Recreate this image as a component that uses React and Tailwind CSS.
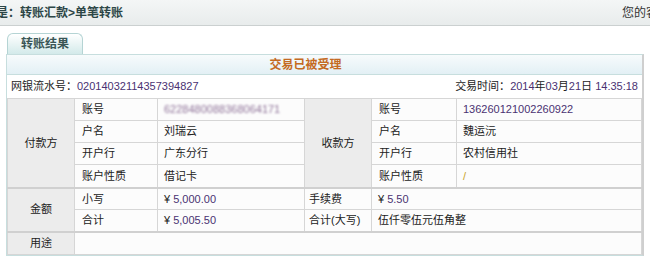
import React from "react";

const FONT = { fontFamily: '"Liberation Sans", Arial, "Noto Sans CJK SC", sans-serif' };

function Num({ children }) {
  return <span className="text-[#4a3272]">{children}</span>;
}

export default function App() {
  const grp = "bg-[#ececec] text-center border border-[#d6d6d6]";
  const lab = "pl-[7px] border border-[#d6d6d6] bg-[#fcfcfc]";
  const val = "pl-[6px] border border-[#d6d6d6] bg-[#fcfcfc]";
  return (
    <div className="w-[650px] h-[261px] overflow-hidden bg-white text-[11px] text-[#222]" style={FONT}>
      <div className="h-[26px] flex items-center border-b border-[#cbd0d0] bg-gradient-to-b from-[#f4f6f6] to-[#e8ecec]">
        <span className="ml-[-4px] font-bold text-[12px] text-[#2c4646] whitespace-nowrap">是：转账汇款&gt;单笔转账</span>
        <span className="ml-auto w-[28px] shrink-0 overflow-hidden whitespace-nowrap text-[12px] text-[#333]">您的客</span>
      </div>
      <div className="px-[6px] pt-[7px]">
        <div className="flex pl-[1px]">
          <div className="w-[76px] h-[21px] rounded-t-[6px] border border-b-0 border-[#b5d4d4] bg-gradient-to-b from-white to-[#d3eaea] text-center font-bold text-[12px] leading-[21px] text-[#3a5656]">
            转账结果
          </div>
        </div>
        <div className="border border-[#c7dede] border-r-2 border-r-[#cfcfcf]">
          <div className="h-[20px] leading-[20px] text-center pr-[38px] font-bold text-[12px] text-[#c46a22] bg-gradient-to-b from-[#f7fbfc] to-[#e3f0f5] border-b border-[#c7dede]">
            交易已被受理
          </div>
          <div className="h-[23px] flex items-center justify-between px-[4px]">
            <span>网银流水号：<Num>02014032114357394827</Num></span>
            <span>交易时间：<Num>2014</Num>年<Num>03</Num>月<Num>21</Num>日 <Num>14:35:18</Num></span>
          </div>
          <table className="w-full border-collapse table-fixed">
            <colgroup>
              <col className="w-[67px]" />
              <col className="w-[83px]" />
              <col className="w-[147px]" />
              <col className="w-[67px]" />
              <col className="w-[85px]" />
              <col />
            </colgroup>
            <tbody>
              <tr className="h-[22px]">
                <td rowSpan={4} className={grp}>付款方</td>
                <td className={lab}>账号</td>
                <td className={val}>
                  <span className="inline-block text-[#8f7399] blur-[1.2px]">6228480088368064171</span>
                </td>
                <td rowSpan={4} className={grp}>收款方</td>
                <td className={lab}>账号</td>
                <td className={val}><Num>136260121002260922</Num></td>
              </tr>
              <tr className="h-[22px]">
                <td className={lab}>户名</td>
                <td className={val}>刘瑞云</td>
                <td className={lab}>户名</td>
                <td className={val}>魏运沅</td>
              </tr>
              <tr className="h-[22px]">
                <td className={lab}>开户行</td>
                <td className={val}>广东分行</td>
                <td className={lab}>开户行</td>
                <td className={val}>农村信用社</td>
              </tr>
              <tr className="h-[23px] border-b-2 border-[#d0d0d0]">
                <td className={lab}>账户性质</td>
                <td className={val}>借记卡</td>
                <td className={lab}>账户性质</td>
                <td className={val}><span className="text-[#c9a32a]">/</span></td>
              </tr>
              <tr className="h-[22px]">
                <td rowSpan={2} className={grp}>金额</td>
                <td className={lab}>小写</td>
                <td className={val}>¥ <Num>5,000.00</Num></td>
                <td className="pl-[4px] border border-[#d6d6d6] bg-[#fcfcfc]">手续费</td>
                <td colSpan={2} className={val}>¥ <Num>5.50</Num></td>
              </tr>
              <tr className="h-[22px] border-b-2 border-[#d0d0d0]">
                <td className={lab}>合计</td>
                <td className={val}>¥ <Num>5,005.50</Num></td>
                <td className="pl-[4px] border border-[#d6d6d6] bg-[#fcfcfc] whitespace-nowrap">合计(大写)</td>
                <td colSpan={2} className={val}>伍仟零伍元伍角整</td>
              </tr>
              <tr className="h-[23px]">
                <td className={grp}>用途</td>
                <td colSpan={5} className={val}></td>
              </tr>
            </tbody>
          </table>
        </div>
      </div>
    </div>
  );
}
